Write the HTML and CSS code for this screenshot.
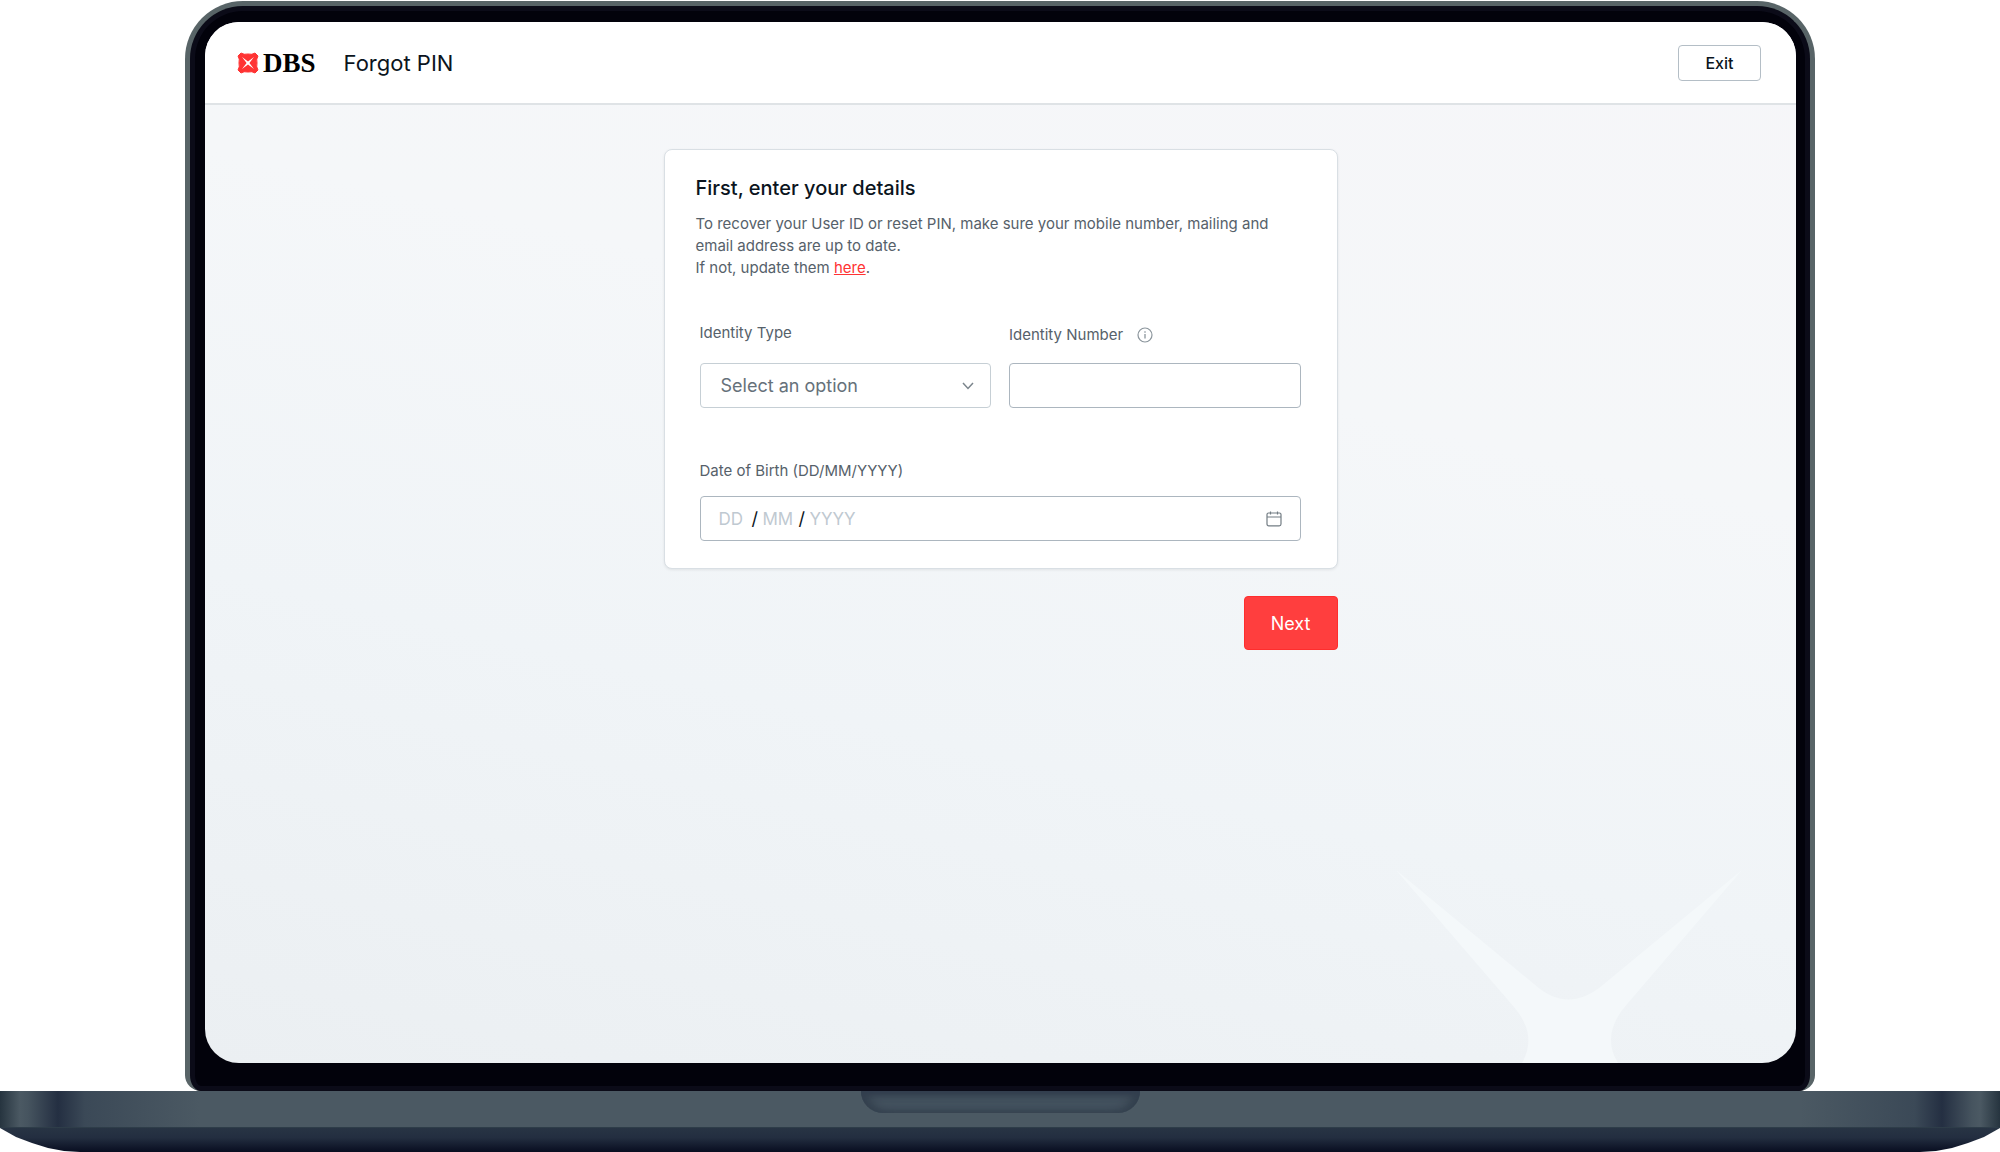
FILE: index.html
```html
<!DOCTYPE html>
<html lang="en">
<head>
  <meta charset="UTF-8">
  <title>Forgot PIN - DBS</title>
  <meta name="viewport" content="width=device-width, initial-scale=1.0">
  <link rel="stylesheet" href="styles.css">
</head>
<body>

  <div class="lid">
    <div class="screen">
      <svg class="watermark" viewBox="0 0 350 193" aria-hidden="true">
        <path d="M0 0 L138 114 Q172 145 208 114 L346 0 L232 133 Q204 164 222 193 H126 Q142 165 118 137 Z" fill="#f4f8fa"/>
      </svg>

      <header class="topbar">
        <a class="logo" href="#" aria-label="DBS">
          <svg width="22" height="22" viewBox="0 0 22 22" aria-hidden="true">
            <path d="M4 1 Q7 3 11 2 Q15 3 18 1 L21 4 Q19 7 20 11 Q19 15 21 18 L18 21 Q15 19 11 20 Q7 19 4 21 L1 18 Q3 15 2 11 Q3 7 1 4 Z" fill="#ff3333" stroke="#ff3333" stroke-linejoin="round"/>
            <path d="M5 5 L11 9.6 L17 5 L12.4 11 L17 17 L11 12.4 L5 17 L9.6 11 Z" fill="#fff"/>
          </svg>
          <span>DBS</span>
        </a>
        <h1>Forgot PIN</h1>
        <button type="button" class="exit">Exit</button>
      </header>

      <main>
        <form>
          <section class="card">
            <h2>First, enter your details</h2>
            <p>To recover your User ID or reset PIN, make sure your mobile number, mailing and email address are up to date.<br>If not, update them <a href="#">here</a>.</p>

            <div class="fields">
              <div class="field">
                <label for="idType">Identity Type</label>
                <div class="select">
                  <select id="idType">
                    <option>Select an option</option>
                    <option>NRIC</option>
                    <option>Passport</option>
                  </select>
                  <svg width="12" height="8" viewBox="0 0 12 8" aria-hidden="true"><path d="M1 1 L6 6.5 L11 1" fill="none" stroke="#7b858c" stroke-width="1.5"/></svg>
                </div>
              </div>

              <div class="field">
                <div class="label-row">
                  <label for="idNumber">Identity Number</label>
                  <svg width="16" height="16" viewBox="0 0 16 16" aria-hidden="true"><circle cx="8" cy="8" r="7" fill="none" stroke="#8b959c" stroke-width="1.2"/><path d="M8 7 V11.5 M8 4.3 V5.7" stroke="#8b959c" stroke-width="1.3"/></svg>
                </div>
                <input type="text" id="idNumber" class="box">
              </div>

              <div class="field wide">
                <label for="day">Date of Birth (DD/MM/YYYY)</label>
                <div class="box date">
                  <input type="text" id="day" class="day" placeholder="DD" maxlength="2">
                  <span>/</span>
                  <input type="text" class="month" placeholder="MM" maxlength="2" aria-label="Month">
                  <span>/</span>
                  <input type="text" class="year" placeholder="YYYY" maxlength="4" aria-label="Year">
                  <svg width="16" height="16" viewBox="0 0 16 16" aria-hidden="true"><path d="M1 3.5 Q1 2 2.5 2 H13.5 Q15 2 15 3.5 V13 Q15 14.8 13.2 14.8 H2.8 Q1 14.8 1 13 Z M1 6 H15 M4.5 0.5 V3.5 M11.5 0.5 V3.5" fill="none" stroke="#737d84" stroke-width="1.2"/></svg>
                </div>
              </div>
            </div>
          </section>

          <button type="submit" class="next">Next</button>
        </form>
      </main>
    </div>
  </div>

  <div class="base">
    <div class="deck"><div class="notch"></div></div>
    <div class="underside"></div>
  </div>

</body>
</html>
```
FILE: styles.css
```css
* {
  box-sizing: border-box;
}
body {
  margin: 0;
  min-height: 100vh;
  display: flex;
  flex-direction: column;
  align-items: center;
  background: #fff;
  font-family: Inter, "Liberation Sans", sans-serif;
  color: #0b1420;
}
button, input, select {
  font-family: inherit;
  margin: 0;
}

/* laptop lid */
.lid {
  flex: 1;
  width: 82%;
  max-width: 1630px;
  margin-top: 1px;
  padding: 16px 14px 28px 15px;
  display: flex;
  background: #02020b;
  border: 5px solid #586467;
  border-bottom: 0;
  border-radius: 58px 58px 16px 16px;
  box-shadow: inset 0 0 0 5px #0b0b18;
}
.screen {
  position: relative;
  flex: 1;
  overflow: hidden;
  border-radius: 34px;
  background: linear-gradient(193deg, #f6f6f9 0%, #f5f7f9 35%, #f0f4f7 65%, #ebeff2 100%);
}
.watermark {
  position: absolute;
  right: 50px;
  bottom: 0;
  width: 350px;
  height: 193px;
}

/* header */
.topbar {
  position: relative;
  display: flex;
  align-items: center;
  height: 83px;
  padding: 1px 35px 0 32px;
  background: #fff;
  border-bottom: 2px solid #dfe3e6;
}
.logo {
  display: flex;
  align-items: center;
  gap: 4px;
  color: #000;
  font: bold 27px "Liberation Serif", serif;
  text-decoration: none;
}
h1 {
  flex: 1;
  margin: 0 0 0 28px;
  font-size: 22px;
  font-weight: 400;
}
.exit {
  width: 83px;
  height: 36px;
  background: #fff;
  border: 1px solid #b4bec6;
  border-radius: 4px;
  color: #0b1420;
  font-size: 16px;
  font-weight: 500;
}

/* form */
main {
  position: relative;
  padding: 44px 20px;
}
form {
  display: flex;
  flex-direction: column;
  gap: 27px;
  max-width: 674px;
  margin: 0 auto;
}
.card {
  padding: 25px 32px 27px 31px;
  background: #fff;
  border: 1px solid #d9dfe4;
  border-radius: 8px;
  box-shadow: 0 1px 3px rgba(0, 0, 0, 0.08);
}
h2 {
  margin: 0 0 12px;
  font-size: 20px;
  font-weight: 500;
  line-height: 26px;
}
p {
  margin: 0;
  color: #56616a;
  font-size: 15px;
  line-height: 22px;
}
p a {
  color: #ff3333;
}
.fields {
  display: grid;
  grid-template-columns: 1fr 1fr;
  gap: 52px 18px;
  margin-top: 43px;
  padding: 0 4px;
}
.field {
  display: flex;
  flex-direction: column;
  justify-content: space-between;
  gap: 17px;
}
.wide {
  grid-column: span 2;
  gap: 14px;
}
label {
  color: #56616a;
  font-size: 15px;
  line-height: 22px;
}
.label-row {
  display: flex;
  align-items: center;
  gap: 14px;
  padding-top: 2px;
}
.select {
  position: relative;
}
select {
  display: block;
  appearance: none;
  width: 100%;
  height: 45px;
  padding: 0 20px;
  background: #fff;
  border: 1px solid #c6cfd5;
  border-radius: 4px;
  color: #66717a;
  font-size: 18px;
}
.select svg {
  position: absolute;
  right: 17px;
  top: 19px;
}
.box {
  width: 100%;
  height: 45px;
  padding: 0 18px;
  background: #fff;
  border: 1px solid #acb6bf;
  border-radius: 4px;
  font-size: 18px;
}
.date {
  display: flex;
  align-items: center;
}
.date input {
  padding: 0;
  border: 0;
  outline: 0;
  font-size: 17px;
}
.date input::placeholder {
  color: #bfc9d1;
}
.date span {
  width: 11px;
}
.day {
  width: 33px;
}
.month {
  width: 36px;
}
.year {
  flex: 1;
}
.next {
  align-self: flex-end;
  width: 94px;
  height: 54px;
  background: #ff3e3e;
  border: 1px solid #ff2d2d;
  border-radius: 4px;
  color: #fff;
  font-size: 18px;
}

/* laptop base */
.base {
  width: 100%;
  overflow: hidden;
}
.deck {
  height: 37px;
  background: linear-gradient(90deg, #26343f 0, #4b5963 20px, #46545f 28px, #242f42 58px, #3b4957 85px, #4b5963 200px, #4b5963 calc(100% - 200px), #3b4957 calc(100% - 85px), #242f42 calc(100% - 58px), #46545f calc(100% - 28px), #4b5963 calc(100% - 20px), #26343f 100%);
  border-bottom: 1px solid #2e3d49;
}
.notch {
  width: 279px;
  height: 22px;
  margin: 0 auto;
  background: #44525f;
  border-radius: 0 0 22px 22px;
  box-shadow: inset 0 4px 6px #323e4e, inset 8px 0 10px #35424f, inset -8px 0 10px #35424f;
}
.underside {
  height: 24px;
  background: linear-gradient(#283444, #232e40 40%, #080d20);
  clip-path: polygon(0 0, 100% 0, calc(100% - 16px) 9px, calc(100% - 32px) 15px, calc(100% - 48px) 20px, calc(100% - 64px) 23px, calc(100% - 80px) 100%, 80px 100%, 64px 23px, 48px 20px, 32px 15px, 16px 9px);
}
```
